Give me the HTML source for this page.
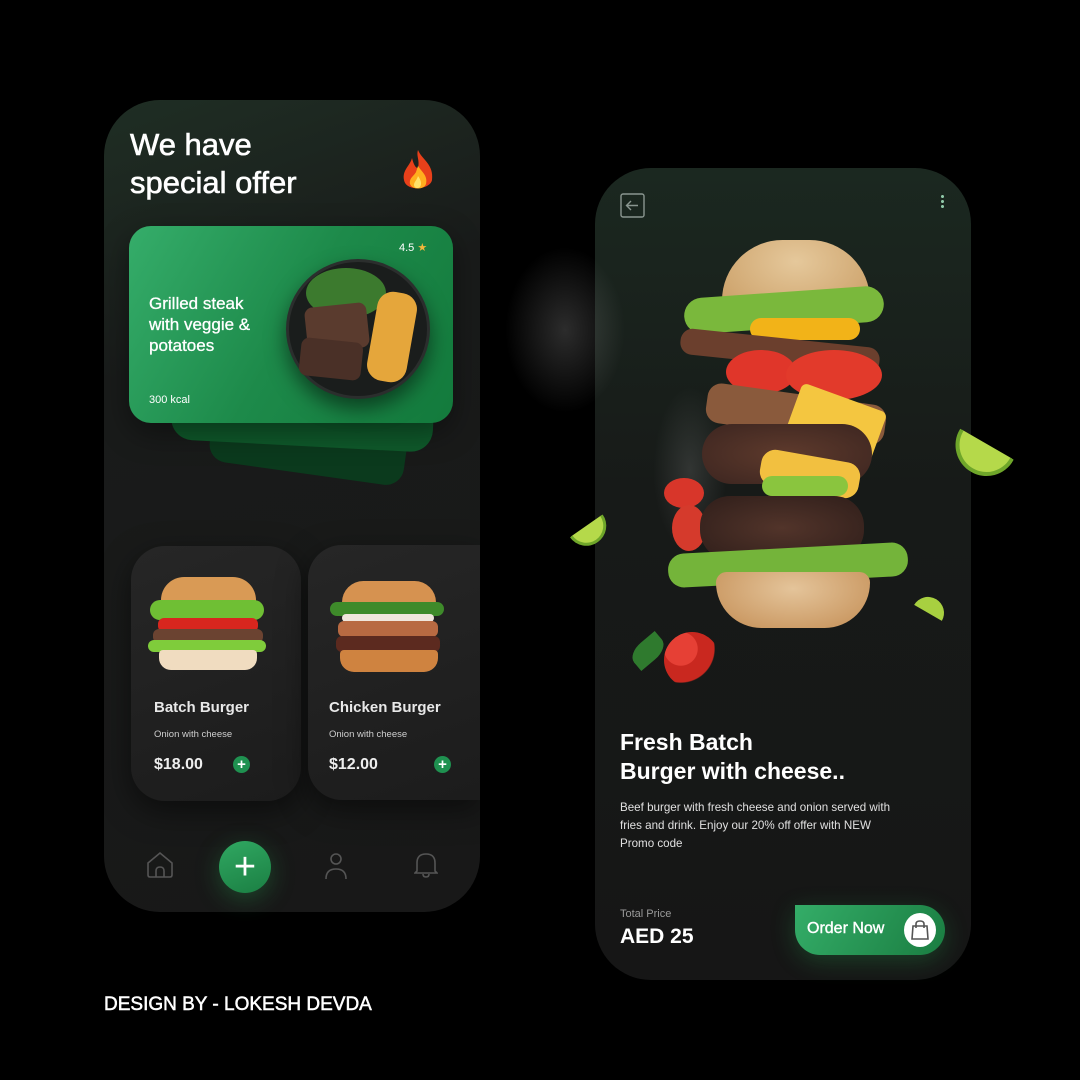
<!DOCTYPE html>
<html><head><meta charset="utf-8"><style>
*{margin:0;padding:0;box-sizing:border-box}
body{width:1080px;height:1080px;background:#000;position:relative;overflow:hidden;font-family:"Liberation Sans",sans-serif;color:#fff}
.abs{position:absolute}
.ph1{left:104px;top:100px;width:376px;height:812px;border-radius:56px;background:linear-gradient(160deg,#1f2e24 0%,#191b1a 30%,#181818 100%)}
.ph2{left:595px;top:168px;width:376px;height:812px;border-radius:56px;background:linear-gradient(180deg,#1b2820 0%,#171a18 40%,#161616 100%)}
.card{border-radius:22px}
.mini{background:linear-gradient(160deg,#262626,#1c1c1c);border-radius:34px;box-shadow:0 10px 30px rgba(0,0,0,.5)}
.plus{width:17px;height:17px;border-radius:50%;background:#1f9150;color:#fff;font-size:15px;line-height:17px;text-align:center;font-weight:bold}
.el{position:absolute;border-radius:50%}
.med{-webkit-text-stroke:0.6px #fff}
</style></head><body>
<div class="abs ph1"></div>
<div class="abs ph2"></div>

<!-- phone 1 -->
<div class="abs med" style="left:130px;top:126px;font-size:31px;line-height:38px">We have<br>special offer</div>
<div class="abs" style="left:400px;top:148px;width:36px;height:46px">
<svg width="36" height="46" viewBox="0 0 36 46"><path d="M18 2C22 12 34 16 32 32C30 42 6 44 4 32C2 22 10 18 12 10C14 18 16 20 18 20C20 12 16 8 18 2Z" fill="#e8401a"/><path d="M18 18C22 24 28 28 26 36C24 42 12 42 10 36C9 30 14 28 16 24Z" fill="#ffae1e"/><path d="M18 28C21 32 22 36 20 39C18 41 14 40 14 37C14 34 17 32 18 28Z" fill="#ffe36a"/></svg></div>
<div class="abs card" style="left:212px;top:392px;width:196px;height:82px;background:#0b3a1d;transform:rotate(8deg);border-radius:18px"></div>
<div class="abs card" style="left:172px;top:366px;width:262px;height:80px;background:#0f5a2b;transform:rotate(3deg)"></div>
<div class="abs card" style="left:129px;top:226px;width:324px;height:197px;background:linear-gradient(120deg,#35ad6a,#1d8a4a 50%,#137a3c);box-shadow:0 10px 30px rgba(0,0,0,.4)"></div>
<div class="abs med" style="left:149px;top:293px;font-size:17px;line-height:21px;-webkit-text-stroke:0.3px #fff">Grilled steak<br>with veggie &amp;<br>potatoes</div>
<div class="abs" style="left:149px;top:394px;font-size:11px">300 kcal</div>
<div class="abs" style="left:399px;top:241px;font-size:11px">4.5 <span style="color:#f3b73c">★</span></div>
<div class="el" style="left:286px;top:259px;width:144px;height:140px;background:#1a1d1c;box-shadow:0 10px 20px rgba(0,0,0,.5);border:3px solid #2b2e2d"></div>
<div class="el" style="left:306px;top:268px;width:80px;height:50px;background:#3c7a2e"></div>
<div class="abs" style="left:306px;top:305px;width:62px;height:45px;background:#5a3b2e;border-radius:8px;transform:rotate(-6deg)"></div>
<div class="abs" style="left:300px;top:340px;width:62px;height:38px;background:#4a3027;border-radius:8px;transform:rotate(6deg)"></div>
<div class="abs" style="left:372px;top:292px;width:40px;height:90px;background:#e5a63b;border-radius:16px;transform:rotate(10deg)"></div>

<div class="abs mini" style="left:131px;top:546px;width:170px;height:255px"></div>
<div class="abs mini" style="left:308px;top:545px;width:172px;height:255px;border-top-right-radius:0;border-bottom-right-radius:0"></div>
<!-- burger 1 -->
<div class="abs" style="left:161px;top:577px;width:95px;height:26px;border-radius:48px 48px 6px 6px;background:#d99a55"></div>
<div class="abs" style="left:150px;top:600px;width:114px;height:20px;border-radius:10px;background:#6fbf34"></div>
<div class="abs" style="left:158px;top:618px;width:100px;height:14px;border-radius:6px;background:#d8261e"></div>
<div class="abs" style="left:153px;top:629px;width:110px;height:14px;border-radius:6px;background:#6b4331"></div>
<div class="abs" style="left:148px;top:640px;width:118px;height:12px;border-radius:6px;background:#7fcc3b"></div>
<div class="abs" style="left:159px;top:650px;width:98px;height:20px;border-radius:4px 4px 12px 12px;background:#f0dcc0"></div>
<!-- burger 2 -->
<div class="abs" style="left:342px;top:581px;width:94px;height:24px;border-radius:48px 48px 6px 6px;background:#d69250"></div>
<div class="abs" style="left:330px;top:602px;width:114px;height:14px;border-radius:8px;background:#3e8a2a"></div>
<div class="abs" style="left:342px;top:614px;width:92px;height:8px;border-radius:4px;background:#f0e6dc"></div>
<div class="abs" style="left:338px;top:621px;width:100px;height:16px;border-radius:6px;background:#b86a42"></div>
<div class="abs" style="left:336px;top:636px;width:104px;height:16px;border-radius:6px;background:#5c2a1f"></div>
<div class="abs" style="left:340px;top:650px;width:98px;height:22px;border-radius:4px 4px 14px 14px;background:#cf8340"></div>

<div class="abs" style="left:154px;top:699px;font-size:15px;font-weight:bold;color:#e8e8e8">Batch Burger</div>
<div class="abs" style="left:154px;top:729px;font-size:9.5px;color:#cfcfcf">Onion with cheese</div>
<div class="abs" style="left:154px;top:756px;font-size:16px;font-weight:bold;color:#eee">$18.00</div>
<div class="abs plus" style="left:233px;top:756px">+</div>
<div class="abs" style="left:329px;top:699px;font-size:15px;font-weight:bold;color:#e8e8e8">Chicken Burger</div>
<div class="abs" style="left:329px;top:729px;font-size:9.5px;color:#cfcfcf">Onion with cheese</div>
<div class="abs" style="left:329px;top:756px;font-size:16px;font-weight:bold;color:#eee">$12.00</div>
<div class="abs plus" style="left:434px;top:756px">+</div>

<!-- nav -->
<svg class="abs" style="left:146px;top:851px" width="28" height="28" viewBox="0 0 28 28" fill="none" stroke="#555" stroke-width="1.6"><path d="M2 12L14 2L26 12V24Q26 26 24 26H4Q2 26 2 24Z"/><path d="M10 26V20Q10 16 14 16Q18 16 18 20V26"/></svg>
<div class="el" style="left:219px;top:841px;width:52px;height:52px;background:linear-gradient(160deg,#30a862,#1b7f43);box-shadow:0 6px 24px rgba(40,160,80,.35)"></div>
<div class="abs" style="left:219px;top:841px;width:52px;height:52px;text-align:center;font-size:38px;line-height:52px;font-weight:300;color:#fff">+</div>
<svg class="abs" style="left:325px;top:852px" width="22" height="28" viewBox="0 0 22 28" fill="none" stroke="#555" stroke-width="1.6"><circle cx="11" cy="7" r="5"/><path d="M1 27Q1 17 11 17Q21 17 21 27"/></svg>
<svg class="abs" style="left:414px;top:851px" width="24" height="28" viewBox="0 0 24 28" fill="none" stroke="#555" stroke-width="1.6"><path d="M3 20V12Q3 3 12 3Q21 3 21 12V20L23 22H1Z"/><path d="M9 23Q9 26 12 26Q15 26 15 23"/></svg>

<!-- phone 2 -->
<svg class="abs" style="left:620px;top:193px" width="25" height="25" viewBox="0 0 25 25" fill="none" stroke="#8a9690" stroke-width="1.4"><rect x="1" y="1" width="23" height="23" rx="2"/><path d="M18 12.5H7M11 8L6.5 12.5L11 17"/></svg>
<div class="abs" style="left:941px;top:194px;width:3px;height:15px;background:radial-gradient(circle,#8fc8a8 1.4px,transparent 1.6px) 0 0/3px 5px"></div>

<!-- smoke -->
<div class="el" style="left:500px;top:240px;width:130px;height:180px;background:radial-gradient(ellipse,rgba(200,200,200,.22),transparent 65%)"></div>
<div class="el" style="left:650px;top:380px;width:80px;height:180px;background:radial-gradient(ellipse,rgba(200,200,200,.15),transparent 65%)"></div>

<!-- big burger -->
<div class="abs" style="left:722px;top:240px;width:148px;height:72px;border-radius:74px 74px 14px 14px;background:radial-gradient(ellipse at 50% 30%,#e5c89b,#c99c63)"></div>
<div class="abs" style="left:684px;top:292px;width:200px;height:36px;border-radius:18px;background:#7ab83c;transform:rotate(-4deg)"></div>
<div class="abs" style="left:750px;top:318px;width:110px;height:22px;border-radius:11px;background:#f2b318"></div>
<div class="abs" style="left:680px;top:338px;width:200px;height:26px;border-radius:12px;background:#6b3f2d;transform:rotate(6deg)"></div>
<div class="el" style="left:726px;top:350px;width:70px;height:44px;background:#e0362a"></div>
<div class="el" style="left:786px;top:350px;width:96px;height:50px;background:#e23a2b"></div>
<div class="abs" style="left:706px;top:394px;width:180px;height:40px;border-radius:14px;background:#8a5a3c;transform:rotate(8deg)"></div>
<div class="abs" style="left:790px;top:396px;width:90px;height:60px;background:#f4c640;transform:rotate(20deg);border-radius:6px"></div>
<div class="abs" style="left:702px;top:424px;width:170px;height:60px;border-radius:30px;background:radial-gradient(ellipse,#5e3a2c,#3c2520)"></div>
<div class="abs" style="left:760px;top:456px;width:100px;height:36px;border-radius:14px;background:#f2c040;transform:rotate(10deg)"></div>
<div class="abs" style="left:762px;top:476px;width:86px;height:20px;border-radius:10px;background:#8ac53e"></div>
<div class="el" style="left:664px;top:478px;width:40px;height:30px;background:#d8362a"></div>
<div class="el" style="left:672px;top:505px;width:34px;height:46px;background:#d53a2c"></div>
<div class="abs" style="left:700px;top:496px;width:164px;height:64px;border-radius:30px;background:radial-gradient(ellipse,#52342a,#2f1e1a)"></div>
<div class="abs" style="left:668px;top:548px;width:240px;height:34px;border-radius:16px;background:#74b43a;transform:rotate(-3deg)"></div>
<div class="abs" style="left:716px;top:572px;width:154px;height:56px;border-radius:14px 14px 60px 60px;background:radial-gradient(ellipse at 50% 30%,#e4c49a,#c48e55)"></div>
<div class="el" style="left:664px;top:632px;width:56px;height:56px;background:radial-gradient(circle at 30% 30%,#e64035 30%,#c9281f 31%,#c9281f 60%,transparent 62%)"></div>
<div class="abs" style="left:630px;top:640px;width:36px;height:22px;border-radius:50% 0;background:#2f7a2e;transform:rotate(-40deg)"></div>
<!-- limes -->
<div class="abs" style="left:948px;top:442px;width:62px;height:32px;border-radius:0 0 32px 32px;background:#b5d94a;border:4px solid #6fa62a;border-top:none;transform:rotate(30deg)"></div>
<div class="abs" style="left:572px;top:524px;width:40px;height:20px;border-radius:0 0 20px 20px;background:#b5d94a;border:3px solid #6fa62a;border-top:none;transform:rotate(-35deg)"></div>
<div class="abs" style="left:916px;top:598px;width:32px;height:16px;border-radius:16px 16px 0 0;background:#a8d040;transform:rotate(30deg)"></div>

<div class="abs" style="left:620px;top:728px;font-size:23px;font-weight:bold;line-height:29px">Fresh Batch<br>Burger with cheese..</div>
<div class="abs" style="left:620px;top:799px;font-size:11.6px;line-height:18px;color:#e0e0e0">Beef burger with fresh cheese and onion served with<br>fries and drink. Enjoy our 20% off offer with NEW<br>Promo code</div>
<div class="abs" style="left:620px;top:908px;font-size:11px;color:#9a9a9a">Total Price</div>
<div class="abs" style="left:620px;top:925px;font-size:21px;font-weight:bold">AED 25</div>
<div class="abs" style="left:795px;top:905px;width:150px;height:50px;border-radius:0 25px 25px 25px;background:linear-gradient(120deg,#34ad68,#1a7d41);box-shadow:0 6px 24px rgba(40,160,80,.3)"></div>
<div class="abs med" style="left:807px;top:920px;font-size:16px;-webkit-text-stroke:0.4px #fff">Order Now</div>
<div class="el" style="left:904px;top:913px;width:32px;height:34px;background:#fff"></div>
<svg class="abs" style="left:910px;top:919px" width="20" height="22" viewBox="0 0 20 22" fill="none" stroke="#555" stroke-width="1.6"><path d="M3 7H17L18 20H2Z"/><path d="M6 9V5Q6 2 10 2Q14 2 14 5V9"/></svg>

<div class="abs med" style="left:104px;top:994px;font-size:19px;-webkit-text-stroke:0.5px #fff">DESIGN BY - LOKESH DEVDA</div>
</body></html>
